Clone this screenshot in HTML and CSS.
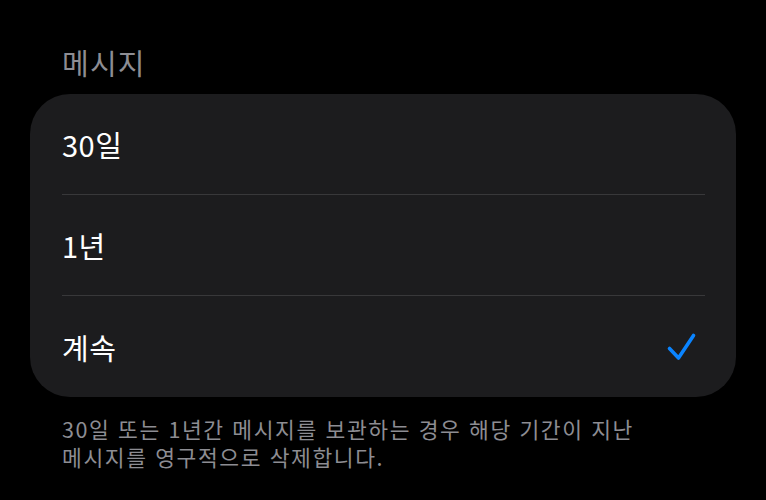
FILE: index.html
```html
<!DOCTYPE html>
<html lang="ko">
<head>
<meta charset="utf-8">
<link rel="stylesheet" href="styles.css">
</head>
<body>
<div class="page">
  <div class="section-title">메시지</div>
  <div class="card">
    <div class="row"><span class="label">30일</span></div>
    <div class="row"><span class="label">1년</span></div>
    <div class="row last"><span class="label">계속</span>
      <svg class="check" width="32" height="32" viewBox="0 0 32 32"><path d="M3.5 17.5 L12.5 27 L27.5 4.5" fill="none" stroke="#0a84ff" stroke-width="3.6" stroke-linecap="round" stroke-linejoin="round"/></svg>
    </div>
  </div>
  <div class="footer">30일 또는 1년간 메시지를 보관하는 경우 해당 기간이 지난<br>메시지를 영구적으로 삭제합니다.</div>
</div>
</body>
</html>
```

FILE: styles.css
```css
html, body {
  margin: 0;
  padding: 0;
  background: #000;
}
.page {
  width: 766px;
  height: 500px;
  font-family: "Noto Sans CJK KR", "Noto Sans", sans-serif;
  padding: 42px 30px 0 30px;
  box-sizing: border-box;
}
.section-title {
  color: #8d8d93;
  font-size: 29px;
  letter-spacing: 1.2px;
  line-height: 40px;
  padding-left: 32px;
  margin-bottom: 12px;
}
.card {
  background: #1c1c1e;
  border-radius: 40px;
  padding: 0 31px 0 32px;
}
.row {
  height: 101px;
  display: flex;
  align-items: center;
  justify-content: space-between;
  border-bottom: 1.5px solid #38383a;
  box-sizing: border-box;
}
.row.last {
  border-bottom: none;
}
.label {
  color: #fff;
  font-size: 29px;
  letter-spacing: 0.5px;
}
.check {
  margin-right: 7px;
}
.footer {
  color: #8d8d93;
  font-size: 21.5px;
  letter-spacing: 1.6px;
  line-height: 28px;
  padding-left: 32px;
  margin-top: 18px;
}
```
